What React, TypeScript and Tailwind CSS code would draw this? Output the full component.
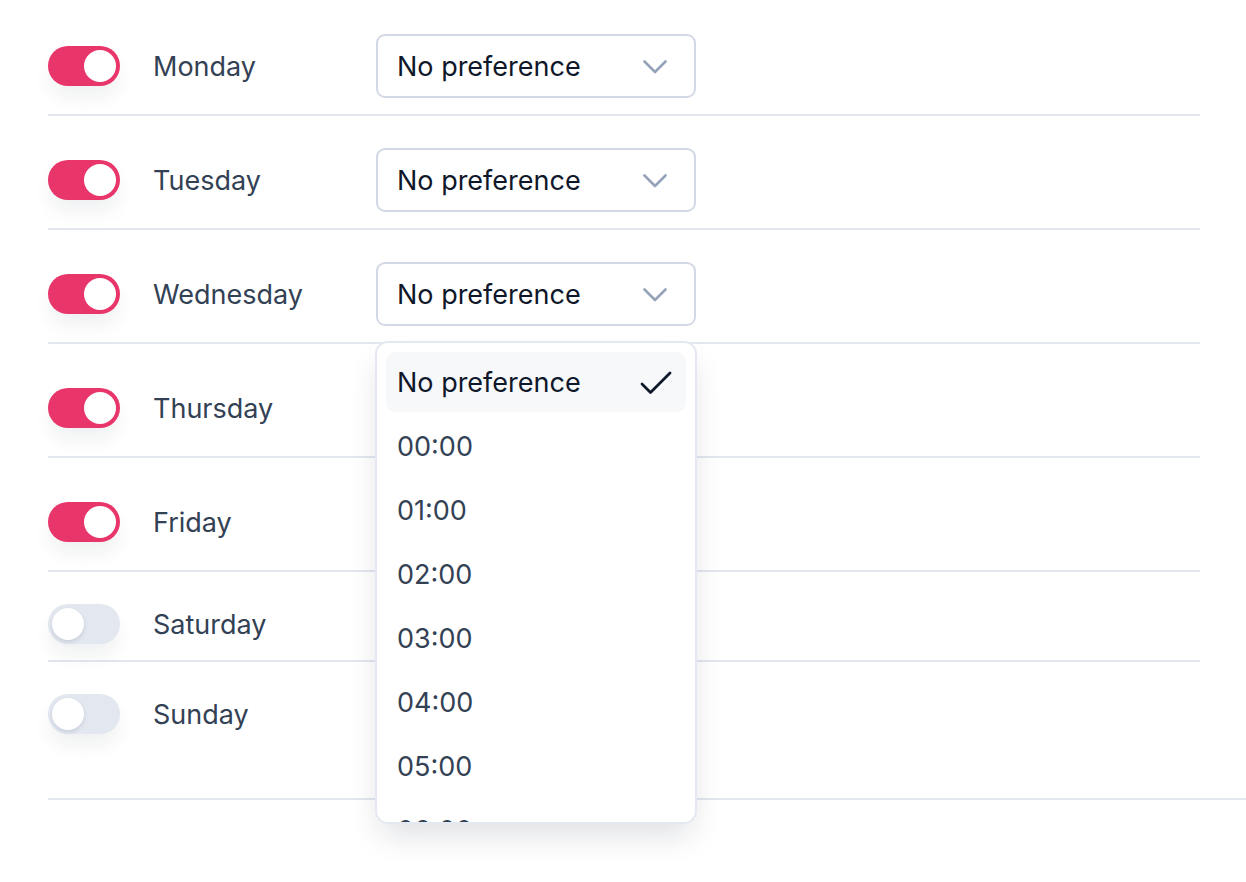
import React, { useState } from "react";

type Day = {
  name: string;
  enabled: boolean;
};

const DAYS: Day[] = [
  { name: "Monday", enabled: true },
  { name: "Tuesday", enabled: true },
  { name: "Wednesday", enabled: true },
  { name: "Thursday", enabled: true },
  { name: "Friday", enabled: true },
  { name: "Saturday", enabled: false },
  { name: "Sunday", enabled: false },
];

const OPTIONS = [
  "No preference",
  "00:00",
  "01:00",
  "02:00",
  "03:00",
  "04:00",
  "05:00",
  "06:00",
  "07:00",
  "08:00",
];

const Chevron = () => (
  <svg width="24" height="14" viewBox="0 0 24 14" fill="none">
    <path
      d="M1.5 1.5 L12 12 L22.5 1.5"
      stroke="#94a3b8"
      strokeWidth="2.6"
      strokeLinecap="round"
      strokeLinejoin="round"
    />
  </svg>
);

const Check = () => (
  <svg width="32" height="24" viewBox="0 0 32 24" fill="none">
    <path
      d="M2 13 L10.5 21.5 L30 2"
      stroke="#0f172a"
      strokeWidth="2.8"
      strokeLinecap="round"
      strokeLinejoin="round"
    />
  </svg>
);

const Toggle: React.FC<{ on: boolean; onClick: () => void }> = ({ on, onClick }) => (
  <button
    type="button"
    onClick={onClick}
    className={`relative flex h-[40px] w-[72px] shrink-0 items-center rounded-full p-[4px] shadow-[0_12px_20px_-2px_rgba(15,23,42,0.07)] ${
      on ? "justify-end bg-[#e8356a]" : "justify-start bg-[#e2e7f0]"
    }`}
  >
    <span
      className={`block h-[32px] w-[32px] rounded-full bg-white ${
        on ? "" : "shadow-[0_2px_4px_rgba(15,23,42,0.12)]"
      }`}
    />
  </button>
);

const TimeSelect: React.FC<{ open: boolean; onToggle: () => void }> = ({ open, onToggle }) => (
  <div className="relative">
    <button
      type="button"
      onClick={onToggle}
      className="flex h-[64px] w-[320px] items-center justify-between rounded-[9px] border-2 border-[#d3d9e4] bg-white pl-[19px] pr-[27px] pt-[2px] text-[27px] leading-[40px] text-[#0f172a]"
    >
      <span>No preference</span>
      <Chevron />
    </button>
    {open && (
      <div className="absolute left-[-1px] top-[79px] z-10 h-[483px] w-[322px] overflow-hidden rounded-[13px] border-2 border-[#e4e8f0] bg-white p-[9px] shadow-[0_16px_32px_-6px_rgba(15,23,42,0.14)]">
        <ul className="flex flex-col gap-[4px]">
          {OPTIONS.map((opt, i) => (
            <li
              key={opt}
              className={`flex h-[60px] items-center justify-between rounded-[9px] pl-[11px] pr-[14px] pt-[2px] text-[27px] leading-[40px] ${
                i === 0 ? "bg-[#f7f8fa] text-[#0f172a]" : "text-[#334155]"
              }`}
            >
              <span>{opt}</span>
              {i === 0 && <Check />}
            </li>
          ))}
        </ul>
      </div>
    )}
  </div>
);

export default function App() {
  const [days, setDays] = useState<Day[]>(DAYS);
  const [openDay, setOpenDay] = useState<string | null>("Wednesday");

  const flip = (name: string) =>
    setDays((prev) => prev.map((d) => (d.name === name ? { ...d, enabled: !d.enabled } : d)));

  return (
    <div
      className="min-h-screen bg-white pt-[2px]"
      style={{ fontFamily: "Inter, 'Noto Sans', sans-serif" }}
    >
      <div className="pl-[48px]">
        <div className="w-[1152px]">
          {days.map((day, i) => (
            <div
              key={day.name}
              className={`flex items-center pt-[32px] ${
                i < days.length - 1 ? "border-b-2 border-[#e3e7f0] pb-[16px]" : "pb-[64px]"
              }`}
            >
              <Toggle on={day.enabled} onClick={() => flip(day.name)} />
              <span className="ml-[33px] w-[223px] pt-[2px] text-[27px] leading-[38px] text-[#334155]">
                {day.name}
              </span>
              {day.enabled && (
                <TimeSelect
                  open={openDay === day.name}
                  onToggle={() => setOpenDay(openDay === day.name ? null : day.name)}
                />
              )}
            </div>
          ))}
        </div>
        <div className="border-b-2 border-[#e3e7f0]" />
      </div>
    </div>
  );
}
